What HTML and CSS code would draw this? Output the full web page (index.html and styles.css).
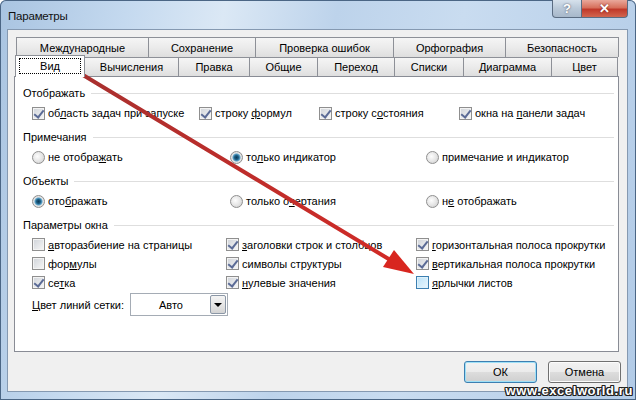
FILE: index.html
```html
<!DOCTYPE html>
<html lang="ru">
<head>
	<meta charset="UTF-8" />
	<title>Параметры</title>
	<link rel="stylesheet" href="styles.css">
</head>
<body>
	<div class="window">
		<div class="titlebar">
			<span class="title">Параметры</span>
			<div class="caption">
				<span class="btn-help">?</span>
				<span class="btn-close">✕</span>
			</div>
		</div>

		<div class="client">
			<div class="tab-row back">
				<div class="tab">Международные</div>
				<div class="tab">Сохранение</div>
				<div class="tab">Проверка ошибок</div>
				<div class="tab">Орфография</div>
				<div class="tab">Безопасность</div>
			</div>
			<div class="tab-row front">
				<div class="tab active"><span class="focus">Вид</span></div>
				<div class="tab">Вычисления</div>
				<div class="tab">Правка</div>
				<div class="tab">Общие</div>
				<div class="tab">Переход</div>
				<div class="tab">Списки</div>
				<div class="tab">Диаграмма</div>
				<div class="tab">Цвет</div>
			</div>

			<div class="panel">
				<div class="group">
					<div class="group-head"><span>Отображать</span><i></i></div>
					<div class="row row-show">
						<label class="opt"><span class="cb on"></span><span>об<u>л</u>асть задач при запуске</span></label>
						<label class="opt"><span class="cb on"></span><span>строку <u>ф</u>ормул</span></label>
						<label class="opt"><span class="cb on"></span><span>строку с<u>о</u>стояния</span></label>
						<label class="opt"><span class="cb on"></span><span>окна на <u>п</u>анели задач</span></label>
					</div>
				</div>

				<div class="group">
					<div class="group-head"><span>Примечания</span><i></i></div>
					<div class="row row-three">
						<label class="opt"><span class="rb"></span><span>не отобра<u>ж</u>ать</span></label>
						<label class="opt"><span class="rb on"></span><span>то<u>л</u>ько индикатор</span></label>
						<label class="opt"><span class="rb"></span><span>примечание и ин<u>д</u>икатор</span></label>
					</div>
				</div>

				<div class="group">
					<div class="group-head"><span>Объекты</span><i></i></div>
					<div class="row row-three">
						<label class="opt"><span class="rb on"></span><span>ото<u>б</u>ражать</span></label>
						<label class="opt"><span class="rb"></span><span>только о<u>ч</u>ертания</span></label>
						<label class="opt"><span class="rb"></span><span>н<u>е</u> отображать</span></label>
					</div>
				</div>

				<div class="group params">
					<div class="group-head"><span>Параметры окна</span><i></i></div>
					<div class="row row-win">
						<label class="opt"><span class="cb"></span><span><u>а</u>вторазбиение на страницы</span></label>
						<label class="opt"><span class="cb on"></span><span><u>з</u>аголовки строк и столбцов</span></label>
						<label class="opt"><span class="cb on"></span><span><u>г</u>оризонтальная полоса прокрутки</span></label>
					</div>
					<div class="row row-win">
						<label class="opt"><span class="cb"></span><span>фор<u>м</u>улы</span></label>
						<label class="opt"><span class="cb on"></span><span>символы структуры</span></label>
						<label class="opt"><span class="cb on"></span><span><u>в</u>ертикальная полоса прокрутки</span></label>
					</div>
					<div class="row row-win">
						<label class="opt"><span class="cb on"></span><span>се<u>т</u>ка</span></label>
						<label class="opt"><span class="cb on"></span><span><u>н</u>улевые значения</span></label>
						<label class="opt"><span class="cb hover"></span><span><u>я</u>рлычки листов</span></label>
					</div>
					<div class="row grid-color">
						<span class="grid-label"><u>Ц</u>вет линий сетки:</span>
						<div class="combo">
							<span class="combo-val">Авто</span>
							<span class="combo-btn"></span>
						</div>
					</div>
				</div>
			</div>

			<div class="buttons">
				<button class="btn default">ОК</button>
				<button class="btn">Отмена</button>
			</div>
		</div>

		<div class="watermark">www.excelworld.ru</div>

		<svg class="arrow" width="636" height="400" viewBox="0 0 636 400">
			<defs>
				<linearGradient id="ar" gradientUnits="userSpaceOnUse" x1="78" y1="72" x2="414" y2="274">
					<stop offset="0" stop-color="#a8302f" />
					<stop offset="1" stop-color="#d42a26" />
				</linearGradient>
			</defs>
			<line x1="78" y1="72" x2="392" y2="261" stroke="url(#ar)" stroke-width="4" stroke-linecap="round" />
			<polygon points="414,274 383,267 394,250" fill="#d8261f" />
		</svg>
	</div>
</body>
</html>
```

FILE: styles.css
```css
*{margin:0;padding:0;box-sizing:border-box;}
body{width:636px;height:400px;overflow:hidden;font-family:"Liberation Sans",Arial,sans-serif;font-size:11px;color:#000;background:#fff;}

.window{
	position:relative;
	width:636px;
	height:400px;
	background:linear-gradient(100deg,#a9c4e1 0%,#c4d9ef 18%,#dbe8f5 32%,#bdd3eb 48%,#c9dcf0 66%,#b2cbe7 100%);
	border-radius:6px 6px 0 0;
	box-shadow:inset 0 0 0 1px #4b6685;
	overflow:hidden;
}

/* title bar */
.titlebar{display:flex;align-items:flex-start;height:29px;padding:0 8px 0 8px;}
.title{margin-top:10px;font-size:11.5px;letter-spacing:-0.2px;color:#111;}
.caption{display:flex;margin-left:auto;}
.caption span{display:flex;align-items:center;justify-content:center;height:18px;border:1px solid #5a6c82;border-top:none;font-weight:bold;}
.btn-help{width:30px;border-radius:0 0 0 4px;background:linear-gradient(#d6e1ec,#b9c8d8 50%,#a7b8ca);color:#fff;font-size:13px;text-shadow:0 0 2px #445;}
.btn-close{width:46px;border-left:none !important;border-radius:0 0 4px 0;background:linear-gradient(#e9a89b,#d7705c 45%,#c0392a 55%,#d2664f);color:#fff;font-size:13px;text-shadow:0 0 2px #611;}

/* client area */
.client{
	height:363px;
	margin:0 8px 0 7px;
	background:#f0f0f0;
	border:1px solid #8599b1;
	padding-top:7px;
}

.tab-row{display:flex;}
.tab-row.back{height:20px;margin-left:8px;}
.tab-row.front{height:19px;margin-left:7px;align-items:flex-end;}
.tab{
	display:flex;
	align-items:center;
	justify-content:center;
	height:100%;
	border:1px solid #8d9097;
	border-bottom:none;
	background:linear-gradient(#f5f5f5,#ebebeb 50%,#dedede);
	margin-left:-1px;
	white-space:nowrap;
}
.tab:first-child{margin-left:0;}
.back .tab:nth-child(1){width:133px;}
.back .tab:nth-child(2){width:108px;}
.back .tab:nth-child(3){width:139px;}
.back .tab:nth-child(4){width:113px;}
.back .tab:nth-child(5){width:114px;}
.front .tab:nth-child(1){width:70px;}
.front .tab:nth-child(2){width:95px;}
.front .tab:nth-child(3){width:72px;}
.front .tab:nth-child(4){width:69px;}
.front .tab:nth-child(5){width:78px;}
.front .tab:nth-child(6){width:70px;}
.front .tab:nth-child(7){width:89px;}
.front .tab:nth-child(8){width:67px;}
.tab.active{
	position:relative;
	z-index:1;
	height:22px;
	margin-bottom:-1px;
	background:#fff;
	padding-bottom:2px;
}
.focus{display:flex;align-items:center;justify-content:center;width:62px;height:16px;border:1px dotted #000;}

/* panel */
.panel{
	width:605px;
	height:276px;
	margin-left:6px;
	background:#fff;
	border:1px solid #898c95;
	padding:6px 0 0 0;
}
.group{height:44px;}
.group.params{height:auto;}
.group-head{display:flex;align-items:center;height:20px;padding:0 4px 0 8px;}
.group-head i{flex:1;height:1px;background:#dedede;margin-left:6px;}
.row{display:flex;align-items:center;height:20px;padding-left:17px;}
.row-win{height:19px;}

.opt{display:flex;align-items:center;white-space:nowrap;}
.row-show .opt:nth-child(1){width:167px;}
.row-show .opt:nth-child(2){width:120px;}
.row-show .opt:nth-child(3){width:140px;}
.row-three .opt:nth-child(1){width:198px;}
.row-three .opt:nth-child(2){width:196px;}
.row-win .opt:nth-child(1){width:194px;}
.row-win .opt:nth-child(2){width:190px;}

.cb,.rb{flex:none;width:13px;height:13px;margin-right:3px;position:relative;}
.cb{
	border:1px solid #8f8f8f;
	background:linear-gradient(135deg,#cfd3d9,#f7f7f7);
	box-shadow:inset 0 0 0 1px #f3f3f3;
}
.cb.on::after{
	content:"";
	position:absolute;
	left:3px;
	top:0;
	width:4px;
	height:8px;
	border:solid #5b6b96;
	border-width:0 2px 2px 0;
	transform:rotate(38deg);
}
.cb.hover{border-color:#3c7fb1;background:linear-gradient(135deg,#b9e2f9,#eaf6fd);box-shadow:inset 0 0 0 1px #def1fb;}
.rb{
	border-radius:50%;
	border:1px solid #8f8f8f;
	background:radial-gradient(circle at 40% 40%,#fdfdfd 0,#e6e6e6 50%,#c9c9c9 100%);
}
.rb.on{background:radial-gradient(circle,#0c3a58 0,#1b5c82 2px,#5ba2c9 3.5px,#e6e6e6 4.5px,#cfcfcf 100%);}

.grid-color{height:23px;margin-top:1px;padding-left:17px;}
.grid-label{width:98px;}
.combo{display:flex;width:98px;height:23px;border:1px solid #a5acb5;background:#fff;padding:1px;}
.combo-val{flex:1;display:flex;align-items:center;justify-content:center;}
.combo-btn{
	position:relative;
	width:16px;
	border:1px solid #8b97a6;
	border-radius:2px;
	background:linear-gradient(#f4f4f4,#e6e6e6 50%,#d4d4d4);
}
.combo-btn::after{
	content:"";
	position:absolute;
	left:3px;
	top:7px;
	border-left:4px solid transparent;
	border-right:4px solid transparent;
	border-top:4px solid #000;
}

/* buttons */
.buttons{display:flex;justify-content:flex-end;gap:11px;margin-top:9px;padding-right:6px;}
.btn{
	width:73px;
	height:22px;
	font:inherit;
	color:#000;
	border:1px solid #707070;
	border-radius:3px;
	background:linear-gradient(#f2f2f2,#ebebeb 50%,#dddddd 51%,#cfcfcf);
	box-shadow:inset 0 0 0 1px #fcfcfc;
}
.btn.default{border-color:#3c7fb1;box-shadow:inset 0 0 0 1px #9ee0f7;}

.watermark{
	position:absolute;
	right:3px;
	bottom:2px;
	font-weight:bold;
	font-size:13px;
	letter-spacing:0.6px;
	color:#fff;
	text-shadow:1px 0 0 #222,-1px 0 0 #222,0 1px 0 #222,0 -1px 0 #222,1px 1px 0 #222,-1px -1px 0 #222,1px -1px 0 #222,-1px 1px 0 #222;
}

.arrow{position:absolute;left:0;top:0;pointer-events:none;}
```
